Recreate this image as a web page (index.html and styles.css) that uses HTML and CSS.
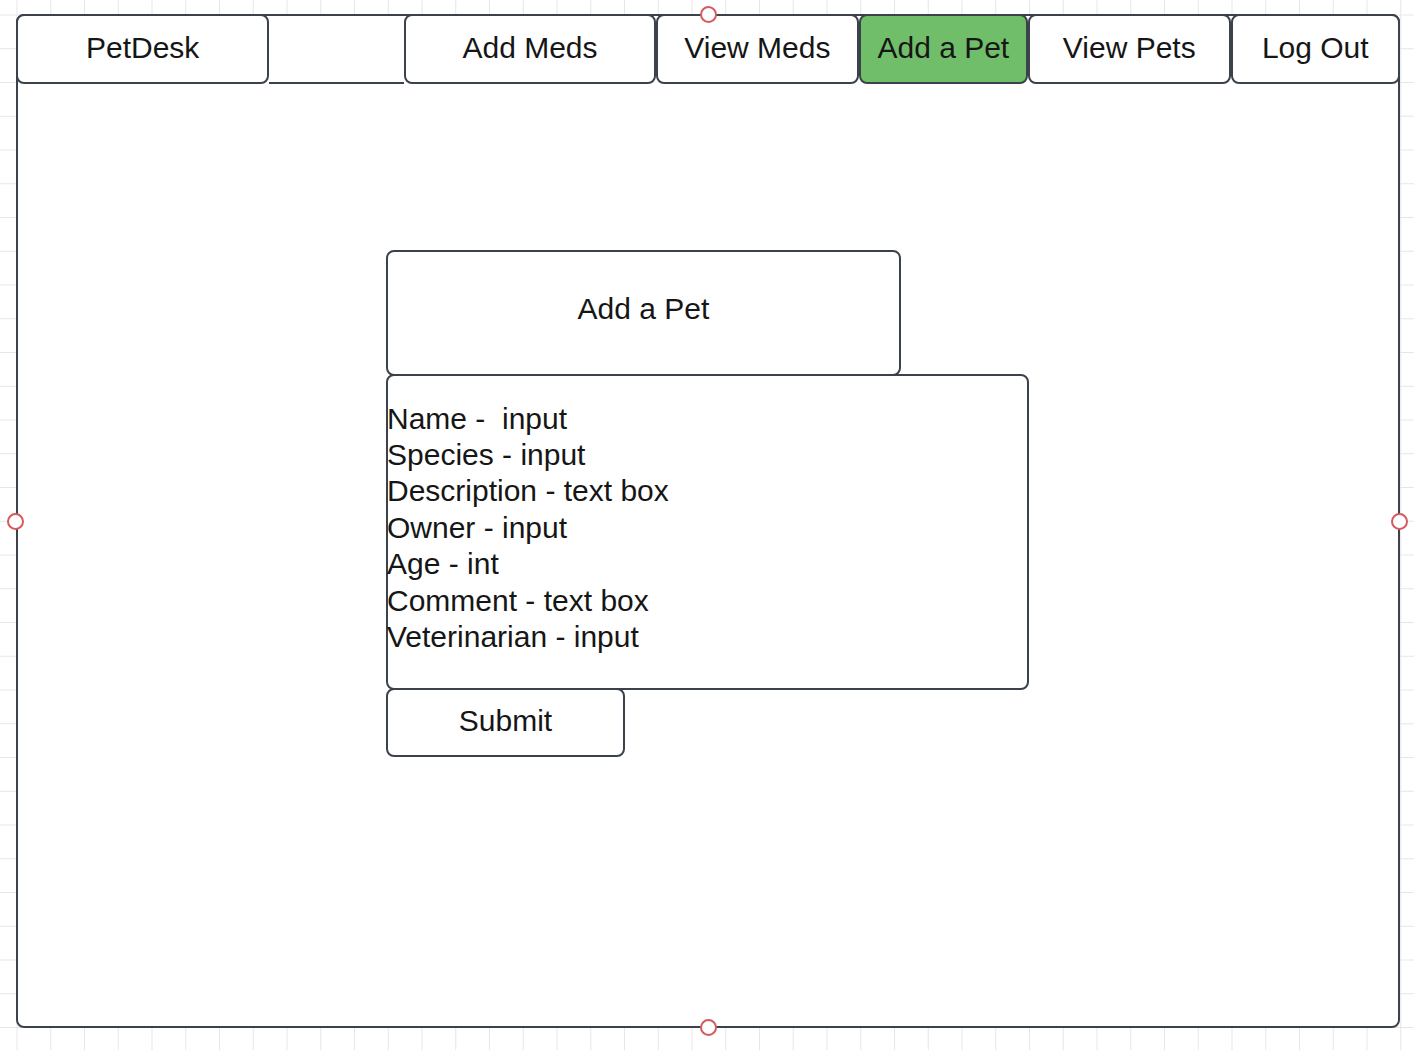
FILE: index.html
```
<!DOCTYPE html>
<html>
<head>
  <meta charset="UTF-8">
  <title>PetDesk - Add a Pet</title>
  <link rel="stylesheet" href="styles.css">
</head>
<body>
  <div class="frame">
    <div class="nav">
      <div class="nav-item brand">PetDesk</div>
      <div class="nav-spacer"></div>
      <div class="nav-item wide">Add Meds</div>
      <div class="nav-item mid">View Meds</div>
      <div class="nav-item narrow active">Add a Pet</div>
      <div class="nav-item mid">View Pets</div>
      <div class="nav-item narrow">Log Out</div>
    </div>

    <div class="main">
      <div class="form-title">Add a Pet</div>
      <div class="form-fields">
        <div class="field">Name -  input</div>
        <div class="field">Species - input</div>
        <div class="field">Description - text box</div>
        <div class="field">Owner - input</div>
        <div class="field">Age - int</div>
        <div class="field">Comment - text box</div>
        <div class="field">Veterinarian - input</div>
      </div>
      <div class="submit-button">Submit</div>
    </div>

    <span class="handle handle-top"></span>
    <span class="handle handle-left"></span>
    <span class="handle handle-right"></span>
    <span class="handle handle-bottom"></span>
  </div>
</body>
</html>
```

FILE: styles.css
```
body {
  margin: 0;
  padding: 14px 0 0 16px;
  min-height: 1050px;
  box-sizing: border-box;
  font-family: "Liberation Sans", Arial, sans-serif;
  color: #161616;
  background-color: #fff;
  background-image:
    linear-gradient(to right, #e6e6e6 1px, transparent 1px),
    linear-gradient(to bottom, #e6e6e6 1px, transparent 1px);
  background-size: 33.75px 33.75px;
  background-position: 16.5px 14.5px;
}

.frame {
  position: relative;
  width: 1384px;
  height: 1014px;
  box-sizing: border-box;
  border: 2px solid #3b424b;
  border-radius: 8px;
  background: white;
}

.nav {
  display: flex;
  height: 70px;
  margin: -2px -2px 0 -2px;
}

.nav-item {
  box-sizing: border-box;
  height: 70px;
  border: 2px solid #3b424b;
  border-radius: 8px;
  background: white;
  display: flex;
  align-items: center;
  justify-content: center;
  font-size: 30px;
  padding-bottom: 3px;
}

.brand {
  width: 254px;
}

.wide {
  width: 253px;
}

.mid {
  width: 203px;
}

.narrow {
  width: 170px;
}

.nav-spacer {
  width: 135px;
  box-sizing: border-box;
  border-bottom: 2px solid #3b424b;
}

.nav-item.active {
  background: #70be6a;
}

.main {
  display: flex;
  flex-direction: column;
  align-items: flex-start;
  padding: 166px 0 0 368px;
}

.form-title {
  box-sizing: border-box;
  width: 515px;
  height: 126px;
  border: 2px solid #3b424b;
  border-radius: 8px;
  display: flex;
  align-items: center;
  justify-content: center;
  font-size: 30px;
  padding-bottom: 9px;
}

.form-fields {
  box-sizing: border-box;
  width: 643px;
  height: 316px;
  margin-top: -2px;
  border: 2px solid #3b424b;
  border-radius: 8px;
  display: flex;
  flex-direction: column;
  justify-content: center;
  padding-bottom: 8px;
}

.field {
  font-size: 30px;
  line-height: 36.4px;
  white-space: pre;
  margin-left: -1px;
}

.submit-button {
  box-sizing: border-box;
  width: 239px;
  height: 69px;
  margin-top: -2px;
  border: 2px solid #3b424b;
  border-radius: 8px;
  display: flex;
  align-items: center;
  justify-content: center;
  font-size: 30px;
  padding-bottom: 3px;
}

.handle {
  position: absolute;
  width: 13px;
  height: 13px;
  border: 2px solid #d45a60;
  border-radius: 50%;
  background: white;
}

.handle-top {
  top: -10px;
  left: 682px;
}

.handle-bottom {
  bottom: -10px;
  left: 682px;
}

.handle-left {
  top: 497px;
  left: -11px;
}

.handle-right {
  top: 497px;
  right: -10px;
}
```
